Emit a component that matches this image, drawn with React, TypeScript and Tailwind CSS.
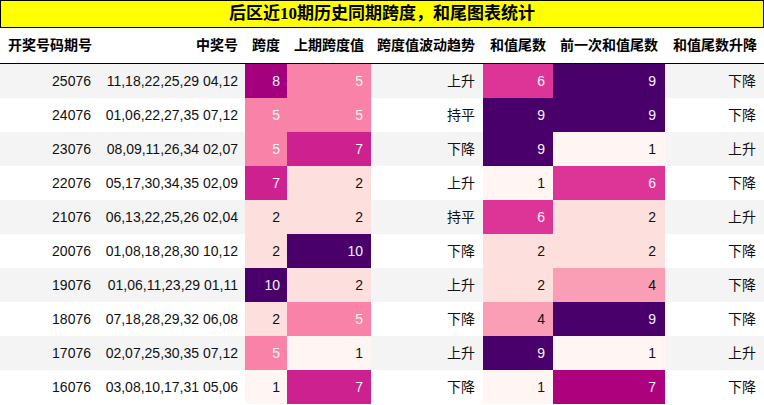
import React from 'react';

type Row = {
  issue: string;
  nums: string;
  span: number;
  prevSpan: number;
  trend: string;
  tail: number;
  prevTail: number;
  tailTrend: string;
};

const rows: Row[] = [
  { issue: '25076', nums: '11,18,22,25,29 04,12', span: 8, prevSpan: 5, trend: '上升', tail: 6, prevTail: 9, tailTrend: '下降' },
  { issue: '24076', nums: '01,06,22,27,35 07,12', span: 5, prevSpan: 5, trend: '持平', tail: 9, prevTail: 9, tailTrend: '下降' },
  { issue: '23076', nums: '08,09,11,26,34 02,07', span: 5, prevSpan: 7, trend: '下降', tail: 9, prevTail: 1, tailTrend: '上升' },
  { issue: '22076', nums: '05,17,30,34,35 02,09', span: 7, prevSpan: 2, trend: '上升', tail: 1, prevTail: 6, tailTrend: '下降' },
  { issue: '21076', nums: '06,13,22,25,26 02,04', span: 2, prevSpan: 2, trend: '持平', tail: 6, prevTail: 2, tailTrend: '上升' },
  { issue: '20076', nums: '01,08,18,28,30 10,12', span: 2, prevSpan: 10, trend: '下降', tail: 2, prevTail: 2, tailTrend: '下降' },
  { issue: '19076', nums: '01,06,11,23,29 01,11', span: 10, prevSpan: 2, trend: '上升', tail: 2, prevTail: 4, tailTrend: '下降' },
  { issue: '18076', nums: '07,18,28,29,32 06,08', span: 2, prevSpan: 5, trend: '下降', tail: 4, prevTail: 9, tailTrend: '下降' },
  { issue: '17076', nums: '02,07,25,30,35 07,12', span: 5, prevSpan: 1, trend: '上升', tail: 9, prevTail: 1, tailTrend: '上升' },
  { issue: '16076', nums: '03,08,10,17,31 05,06', span: 1, prevSpan: 7, trend: '下降', tail: 1, prevTail: 7, tailTrend: '下降' },
];

// RdPu-ish shades, keyed by column scale
const spanShade: Record<number, string> = {
  1: 'bg-[#fff5f2] text-[#111]',
  2: 'bg-[#fde0dd] text-[#111]',
  5: 'bg-[#f882a8] text-[#f4f4f4]',
  7: 'bg-[#cd218f] text-[#f4f4f4]',
  8: 'bg-[#a4007d] text-[#f4f4f4]',
  10: 'bg-[#49006a] text-[#f4f4f4]',
};

const tailShade: Record<number, string> = {
  1: 'bg-[#fff5f2] text-[#111]',
  2: 'bg-[#fde0dd] text-[#111]',
  4: 'bg-[#fa9eb5] text-[#111]',
  6: 'bg-[#dd3497] text-[#f4f4f4]',
  7: 'bg-[#ae017e] text-[#f4f4f4]',
  9: 'bg-[#49006a] text-[#f4f4f4]',
};

const cols = 'grid grid-cols-[99px_146px_42px_84px_112px_70px_112px_99px]';

export default function App() {
  return (
    <div className="w-[764px] h-[405px] bg-white text-[#111] font-['Liberation_Sans','Noto_Sans_CJK_SC',sans-serif] overflow-hidden">
      {/* Title */}
      <div className="h-[28px] bg-[#ffff00] border border-black flex items-center justify-center">
        <span className="text-[17px] font-bold text-black font-['Liberation_Serif','Noto_Sans_CJK_SC',serif]">
          后区近10期历史同期跨度，和尾图表统计
        </span>
      </div>

      {/* Header */}
      <div className={`${cols} h-[36px] items-center border-b-[1.5px] border-black text-[14px] font-bold text-black text-right`}>
        <div className="pl-2 text-left">开奖号码期号</div>
        <div className="pr-[7px]">中奖号</div>
        <div className="pr-[7px]">跨度</div>
        <div className="pr-[7px]">上期跨度值</div>
        <div className="pr-[8px]">跨度值波动趋势</div>
        <div className="pr-[7px]">和值尾数</div>
        <div className="pr-[7px]">前一次和值尾数</div>
        <div className="pr-[7px]">和值尾数升降</div>
      </div>

      {/* Body */}
      {rows.map((r, i) => (
        <div key={r.issue} className={`${cols} h-[34px] text-[14px] text-right ${i % 2 === 0 ? 'bg-[#f4f4f4]' : 'bg-white'}`}>
          <div className="pr-2 flex items-center justify-end">{r.issue}</div>
          <div className="pr-[7px] flex items-center justify-end">{r.nums}</div>
          <div className={`pr-[7px] flex items-center justify-end ${spanShade[r.span]}`}>{r.span}</div>
          <div className={`pr-[8px] flex items-center justify-end ${spanShade[r.prevSpan]}`}>{r.prevSpan}</div>
          <div className="pr-[8px] flex items-center justify-end">{r.trend}</div>
          <div className={`pr-[8px] flex items-center justify-end ${tailShade[r.tail]}`}>{r.tail}</div>
          <div className={`pr-[9px] flex items-center justify-end ${tailShade[r.prevTail]}`}>{r.prevTail}</div>
          <div className="pr-[8px] flex items-center justify-end">{r.tailTrend}</div>
        </div>
      ))}
    </div>
  );
}
